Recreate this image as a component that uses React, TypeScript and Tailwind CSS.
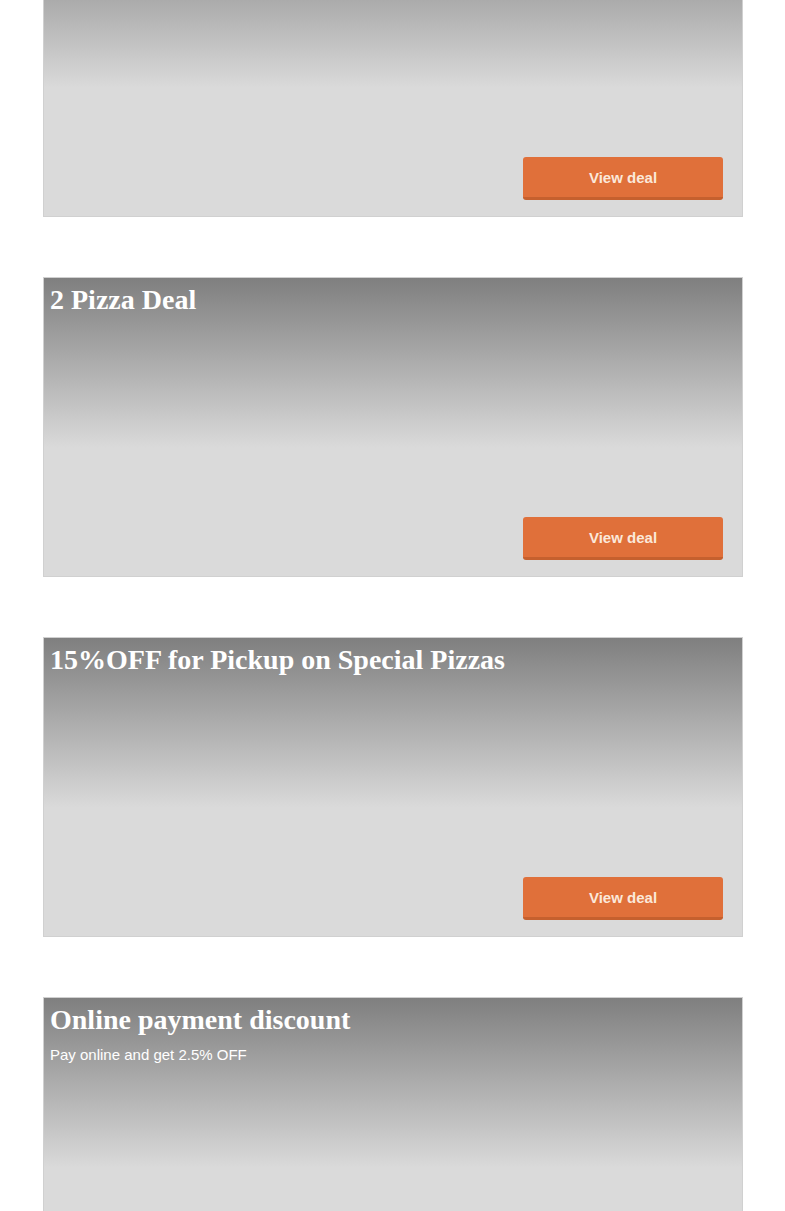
import React from "react";

type Deal = { title: string; subtitle?: string };

const deals: Deal[] = [
  { title: "" },
  { title: "2 Pizza Deal" },
  { title: "15%OFF for Pickup on Special Pizzas" },
  { title: "Online payment discount", subtitle: "Pay online and get 2.5% OFF" },
];

function Card({ deal }: { deal: Deal }) {
  return (
    <div className="flex h-[300px] w-[700px] flex-col border border-[#d0d0d0] bg-[linear-gradient(to_bottom,#7f7f7f_0px,#dadada_170px,#dadada_100%)] px-[6px] pt-[6px]">
      <h2 className="m-0 min-h-[32px] text-[28px] font-bold leading-[1.15] text-white [font-family:'Liberation_Serif',serif]">
        {deal.title}
      </h2>
      {deal.subtitle && (
        <p className="mt-[10px] text-[15px] leading-[1.15] text-white [font-family:'Liberation_Sans',Arial,sans-serif]">
          {deal.subtitle}
        </p>
      )}
      <div className="mt-auto mb-[16px] mr-[13px] flex justify-end">
        <button className="h-[43px] w-[200px] rounded-[3px] border-b-[3px] border-[#c5602e] bg-[#e0703a] pt-[2px] text-[15px] font-bold text-[#fbe8da] [font-family:'Liberation_Sans',Arial,sans-serif]">
          View deal
        </button>
      </div>
    </div>
  );
}

export default function App() {
  return (
    <div className="h-[1211px] overflow-hidden bg-white">
      <div className="-mt-[83px] flex flex-col gap-[60px] pl-[43px]">
        {deals.map((d, i) => (
          <Card key={i} deal={d} />
        ))}
      </div>
    </div>
  );
}
